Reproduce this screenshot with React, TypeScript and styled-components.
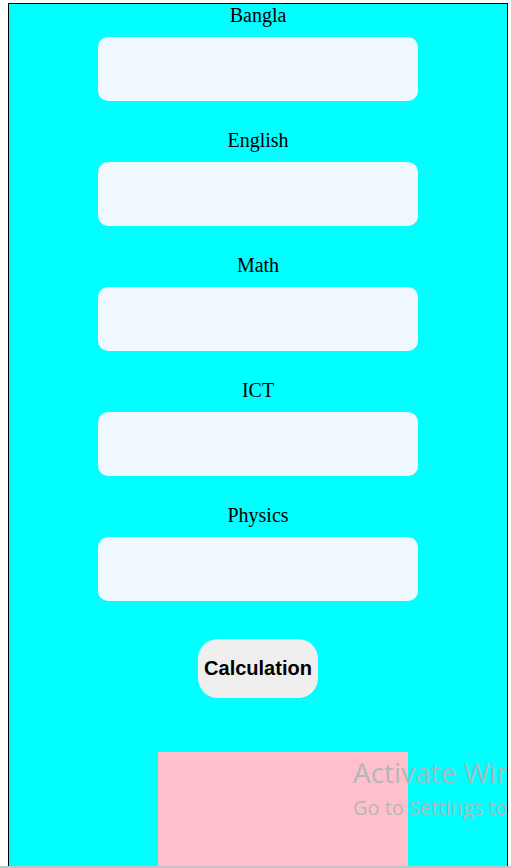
import React from "react";
import styled, { createGlobalStyle } from "styled-components";

const Global = createGlobalStyle`
  html, body { margin: 0; padding: 0; background: #ffffff; }
  body { font-family: "Liberation Serif", "Times New Roman", serif; }
`;

const Page = styled.div`
  padding: 3px 8px 0 8px;
`;

const Panel = styled.div`
  box-sizing: border-box;
  width: 500px;
  border: 1px solid #000;
  background: #00ffff;
  display: flex;
  flex-direction: column;
  align-items: center;
  padding-bottom: 40px;
  position: relative;
  overflow: hidden;
`;

const Form = styled.div`
  display: flex;
  flex-direction: column;
  align-items: center;
  gap: 28px;
`;

const Field = styled.div`
  display: flex;
  flex-direction: column;
  align-items: center;
  gap: 10px;
`;

const Label = styled.label`
  font-family: "Liberation Serif", "Times New Roman", serif;
  font-size: 20px;
  line-height: 23px;
  color: #000;
`;

const Input = styled.input`
  box-sizing: border-box;
  width: 320px;
  height: 64px;
  border: none;
  border-radius: 10px;
  background: #f0f8ff;
  outline: none;
`;

const Button = styled.button`
  margin-top: 38px;
  width: 120px;
  height: 59px;
  border: none;
  border-radius: 20px;
  background: #efefef;
  font-family: "Liberation Sans", Arial, sans-serif;
  font-weight: bold;
  font-size: 20px;
  color: #000;
  padding: 0;
`;

const Result = styled.div`
  margin-top: 54px;
  margin-left: 50px;
  width: 250px;
  height: 160px;
  background: #ffc0cb;
`;

const Watermark = styled.div`
  position: absolute;
  left: 344px;
  top: 748px;
  font-family: "Open Sans", "Noto Sans", sans-serif;
  color: rgba(176, 182, 184, 0.95);
  white-space: nowrap;
  pointer-events: none;
`;

const WmTitle = styled.div`
  font-size: 28px;
  line-height: 40px;
`;

const WmSub = styled.div`
  margin-top: 3px;
  font-size: 20px;
  line-height: 26px;
`;

const TaskbarEdge = styled.div`
  position: fixed;
  left: 0;
  right: 0;
  bottom: 0;
  height: 2px;
  background: #c4c4c4;
`;

const subjects = ["Bangla", "English", "Math", "ICT", "Physics"];

export default function App() {
  return (
    <>
      <Global />
      <Page>
        <Panel>
          <Form>
            {subjects.map((s) => (
              <Field key={s}>
                <Label>{s}</Label>
                <Input type="text" />
              </Field>
            ))}
          </Form>
          <Button>Calculation</Button>
          <Result />
          <Watermark>
            <WmTitle>Activate Windows</WmTitle>
            <WmSub>Go to Settings to activate Windows.</WmSub>
          </Watermark>
        </Panel>
      </Page>
      <TaskbarEdge />
    </>
  );
}
